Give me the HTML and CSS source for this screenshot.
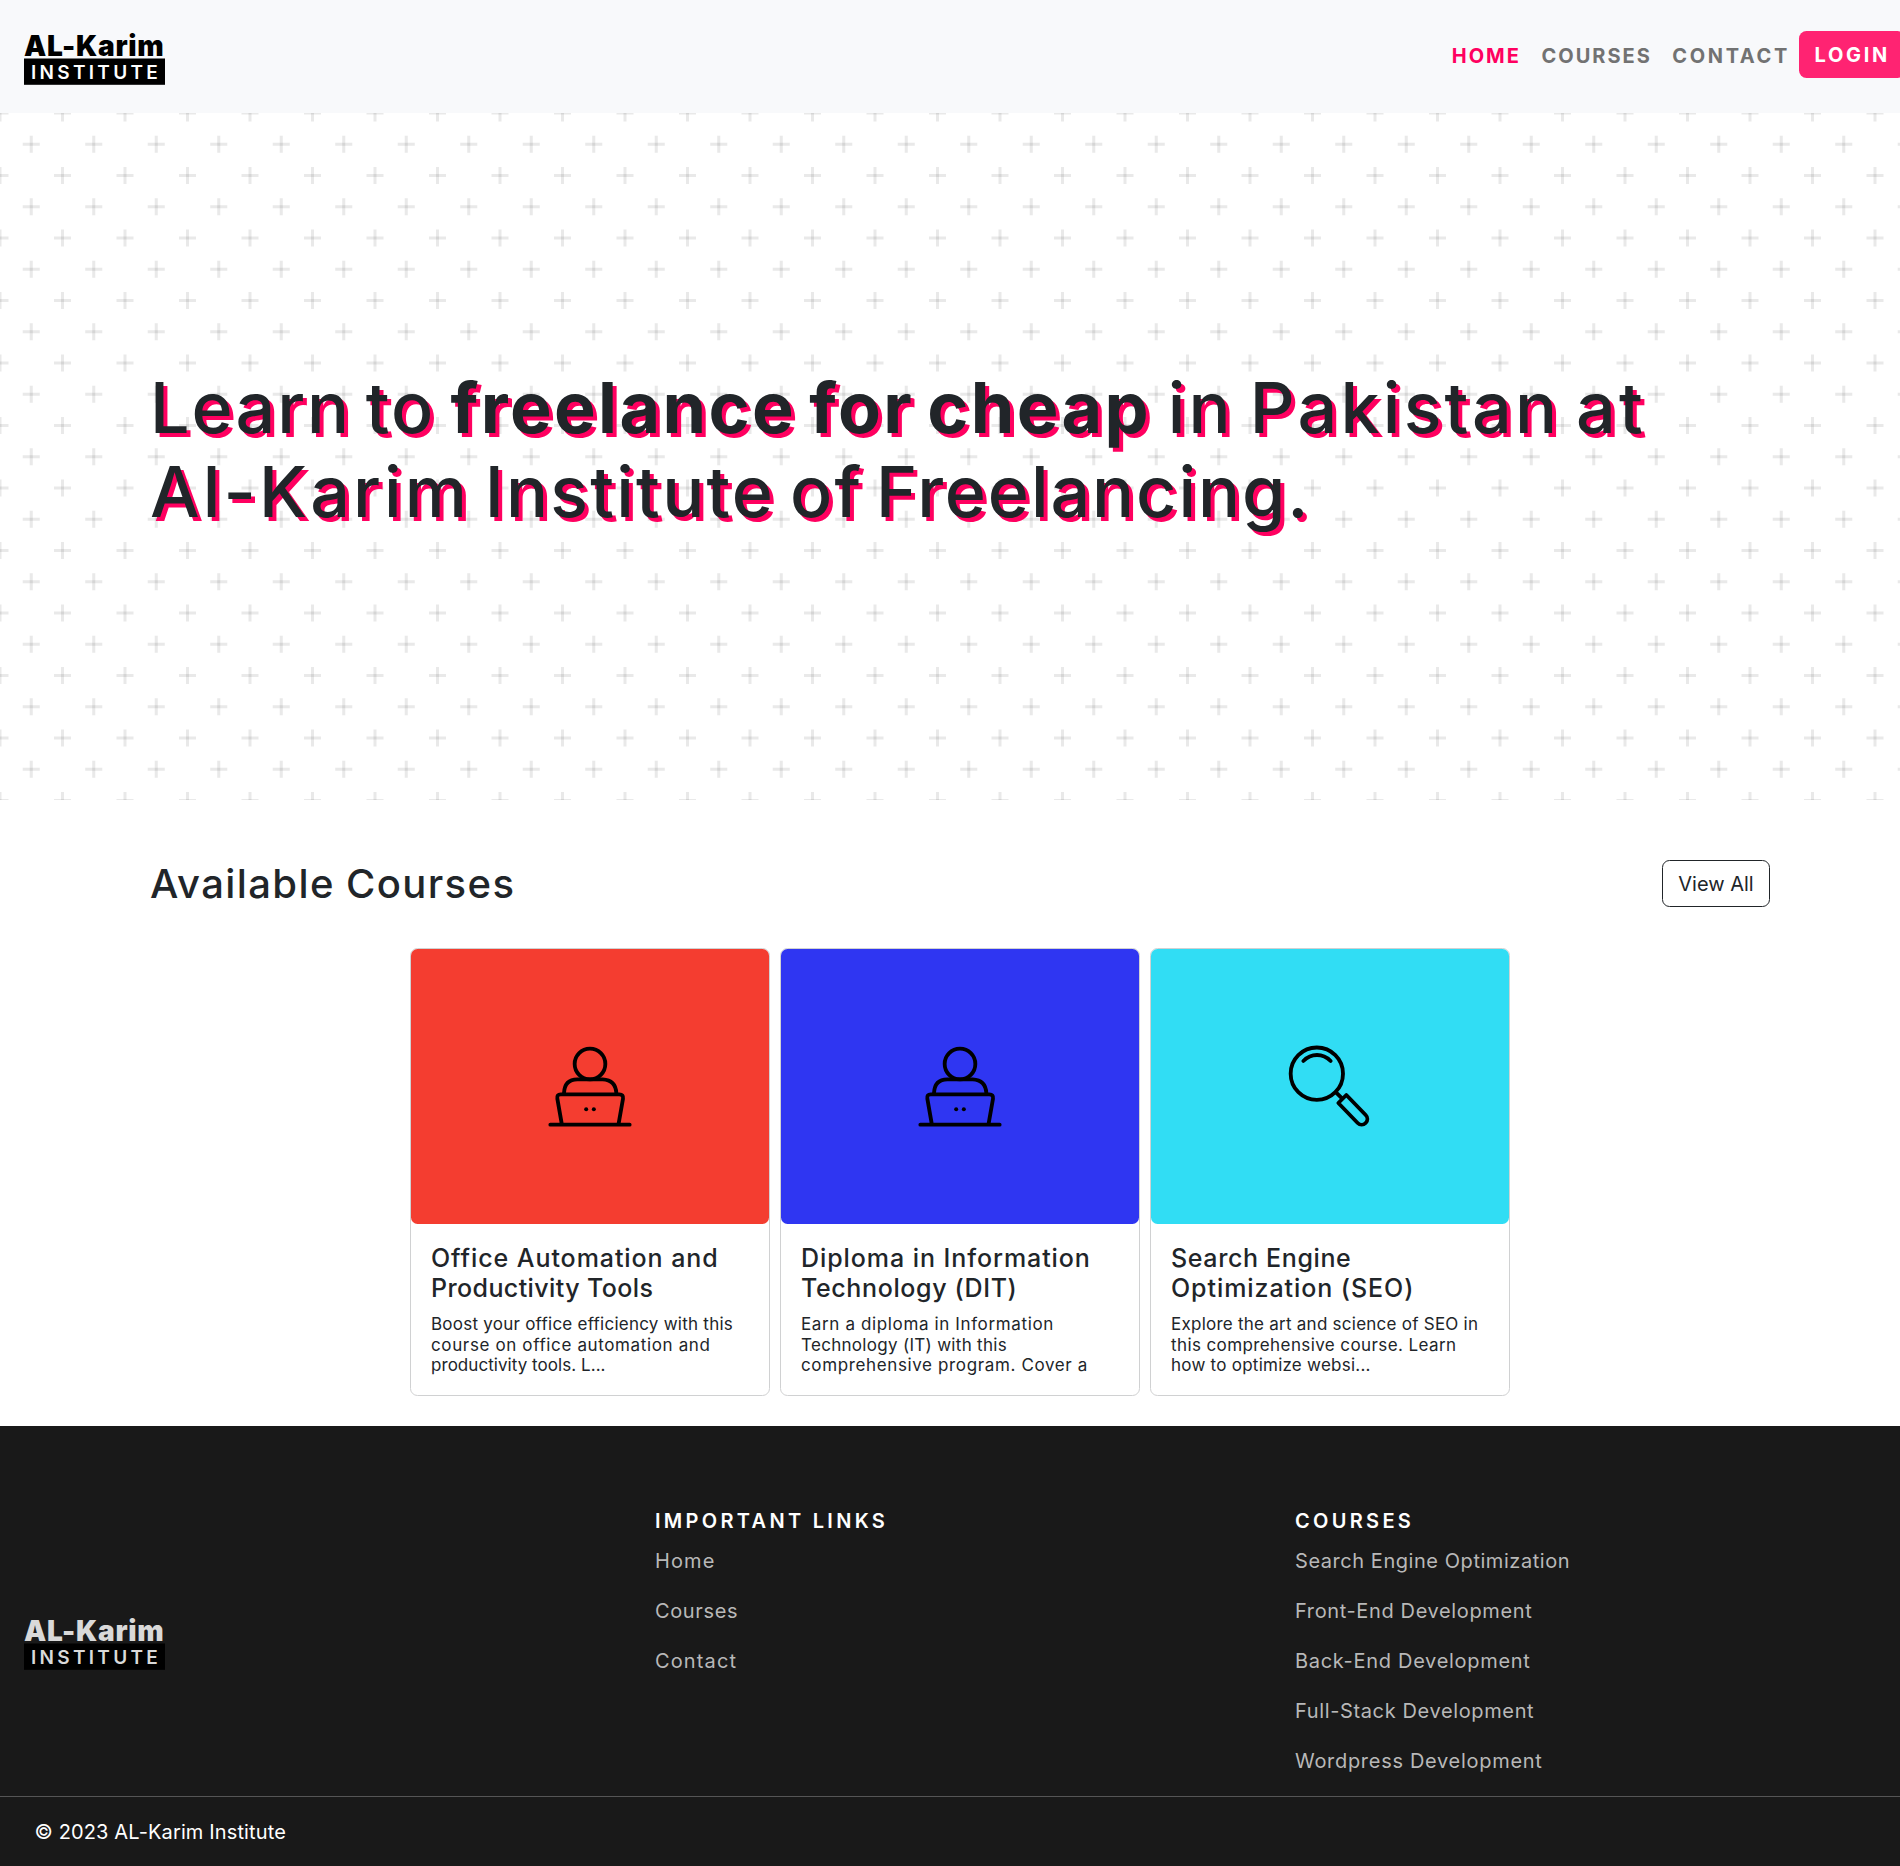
FILE: index.html
```html
<!DOCTYPE html>
<html lang="en">
<head>
<meta charset="utf-8">
<title>AL-Karim Institute</title>
<link rel="stylesheet" href="styles.css">
</head>
<body>
<header class="header">
  <a class="logo" href="#">
    <svg width="146" height="50" viewBox="0 0 146 50">
      <text class="logo-name" x="0" y="21">AL-Karim</text>
      <rect class="logo-bar" x="0" y="23.5" width="141" height="26.3"/>
      <text class="logo-sub" x="7" y="43.7">INSTITUTE</text>
    </svg>
  </a>
  <nav class="nav">
    <a class="nav-link active" href="#">HOME</a>
    <a class="nav-link" href="#">COURSES</a>
    <a class="nav-link contact" href="#">CONTACT</a>
    <a class="login" href="#">LOGIN</a>
  </nav>
</header>

<section class="hero">
  <h1 class="hero-title">
    <span class="hero-line"><span class="lead">Learn to</span> <b>freelance for cheap</b> <span class="place">in Pakistan at</span></span>
    <span class="hero-line"><span class="name">Al-Karim</span> <span class="inst">Institute of</span> <span class="free">Freelancing.</span></span>
  </h1>
</section>

<section class="courses">
  <div class="courses-head">
    <h2 class="courses-title">Available Courses</h2>
    <a class="view-all" href="#">View All</a>
  </div>
  <div class="cards">
    <article class="card">
      <div class="card-image red">
        <svg class="icon" viewBox="84 75 252 252">
          <circle cx="210" cy="132" r="46"/>
          <path d="M132 221v-2Q134 178 172 178H248Q287 180 289 219v2"/>
          <path d="M125 310L112 236Q110 223 122 223H298Q311 223 309 236L296 310M91 314H329"/>
          <circle class="dot" cx="198.500" cy="268" r="6"/><circle class="dot" cx="221.500" cy="268" r="6"/>
        </svg>
      </div>
      <div class="card-body">
        <h3 class="card-title"><span class="t9">Office Automation and</span><span class="t4">Productivity Tools</span></h3>
        <p class="card-text"><span class="t25">Boost your office efficiency with this</span><span class="t6">course on office automation and</span><span class="t05">productivity tools. L...</span></p>
      </div>
    </article>
    <article class="card">
      <div class="card-image blue">
        <svg class="icon" viewBox="84 75 252 252">
          <circle cx="210" cy="132" r="46"/>
          <path d="M132 221v-2Q134 178 172 178H248Q287 180 289 219v2"/>
          <path d="M125 310L112 236Q110 223 122 223H298Q311 223 309 236L296 310M91 314H329"/>
          <circle class="dot" cx="198.500" cy="268" r="6"/><circle class="dot" cx="221.500" cy="268" r="6"/>
        </svg>
      </div>
      <div class="card-body">
        <h3 class="card-title"><span class="t9">Diploma in Information</span><span class="t6">Technology (DIT)</span></h3>
        <p class="card-text"><span class="t6">Earn a diploma in Information</span><span class="t3">Technology (IT) with this</span><span class="t6">comprehensive program. Cover a</span></p>
      </div>
    </article>
    <article class="card">
      <div class="card-image cyan">
        <svg class="icon" viewBox="84 75 252 252">
          <circle cx="170.500" cy="161" r="78.500"/>
          <path d="M130 123Q148 105 171 105Q194 105 212 123M228 217L246 235"/>
          <path d="M235 249L259 225L317 285A16.500 16.500 0 0 1 293 309Z"/>
        </svg>
      </div>
      <div class="card-body">
        <h3 class="card-title"><span class="t6">Search Engine</span><span class="t9">Optimization (SEO)</span></h3>
        <p class="card-text"><span class="t25">Explore the art and science of SEO in</span><span class="t4">this comprehensive course. Learn</span><span class="t25">how to optimize websi...</span></p>
      </div>
    </article>
  </div>
</section>

<footer class="footer">
  <div class="footer-grid">
    <a class="footer-logo" href="#">
      <svg width="146" height="50" viewBox="0 0 146 50">
        <text class="logo-name" x="0" y="21">AL-Karim</text>
        <rect class="logo-bar" x="0" y="23.5" width="141" height="26.3"/>
        <text class="logo-sub" x="7" y="43.7">INSTITUTE</text>
      </svg>
    </a>
    <div class="footer-col">
      <h4 class="footer-title">IMPORTANT LINKS</h4>
      <a class="t11" href="#">Home</a>
      <a class="t6" href="#">Courses</a>
      <a class="t11" href="#">Contact</a>
    </div>
    <div class="footer-col">
      <h4 class="footer-title">COURSES</h4>
      <a class="t55" href="#">Search Engine Optimization</a>
      <a class="t6" href="#">Front-End Development</a>
      <a class="t7" href="#">Back-End Development</a>
      <a class="t6" href="#">Full-Stack Development</a>
      <a class="t7" href="#">Wordpress Development</a>
    </div>
  </div>
  <div class="copyright">© 2023 AL-Karim Institute</div>
</footer>
</body>
</html>
```
FILE: styles.css
```css
* { box-sizing: border-box; }
html { overflow: hidden; }
body {
  margin: 0;
  overflow-x: hidden;
  background: #fff;
  color: #212529;
  font: 400 20px/30px "Inter", "Liberation Sans", sans-serif;
}
a { color: inherit; text-decoration: none; }
h1, h2, h3, h4, p { margin: 0; }
svg { display: block; overflow: visible; }

/* Letter tracking steps */
.t05 { letter-spacing: .05px; }
.t25 { letter-spacing: .246px; }
.t3 { letter-spacing: .3px; }
.t4 { letter-spacing: .4px; }
.t55 { letter-spacing: .55px; }
.t6 { letter-spacing: .63px; }
.t7 { letter-spacing: .7px; }
.t9 { letter-spacing: .93px; }
.t11 { letter-spacing: 1.13px; }

/* Header */
.header {
  display: flex;
  align-items: center;
  justify-content: space-between;
  height: 113px;
  padding-left: 24px;
  background: #f8f9fb;
}
.logo { margin-top: 7px; }
.logo-name { font-weight: 900; font-size: 28px; letter-spacing: .7px; fill: #000; }
.logo-sub { font-weight: 600; font-size: 19px; letter-spacing: 3.3px; fill: #fff; }
.logo-bar { fill: #000; }
.nav {
  display: grid;
  grid-template-columns: 89.8px 130.8px 126.7px 106px;
  align-items: center;
  width: 448.3px;
  margin-bottom: 4px;
  font-weight: 700;
  letter-spacing: 2px;
}
.nav-link { padding-top: 2px; color: #727272; }
.nav-link.active { color: #ff0060; }
.nav-link.contact { letter-spacing: 2.63px; }
.login {
  height: 47px;
  padding: 8.5px 15.5px;
  border-radius: 7.5px;
  background: #ff2372;
  color: #fff;
  letter-spacing: 2.7px;
}

/* Hero */
.hero {
  display: flex;
  align-items: center;
  height: 687px;
  padding: 0 130px 13px 150px;
  background: #fff url("data:image/svg+xml,%3Csvg xmlns='http://www.w3.org/2000/svg' width='125' height='125'%3E%3Cdefs%3E%3Cg id='c' fill='%23000' fill-opacity='.085'%3E%3Crect x='-1.500' y='-8.500' width='3' height='17'/%3E%3Crect x='-8.500' y='-1.500' width='17' height='3'/%3E%3C/g%3E%3Cg id='r'%3E%3Cuse href='%23c'/%3E%3Cuse href='%23c' x='62.500'/%3E%3Cuse href='%23c' x='125'/%3E%3C/g%3E%3C/defs%3E%3Cuse href='%23r'/%3E%3Cuse href='%23r' x='31.250' y='31.250'/%3E%3Cuse href='%23r' y='62.500'/%3E%3Cuse href='%23r' x='31.250' y='93.750'/%3E%3Cuse href='%23r' y='125'/%3E%3C/svg%3E") 0 0 / 125px 125px;
}
.hero-title {
  font-weight: 500;
  font-size: 70px;
  line-height: 84px;
  word-spacing: -6px;
  text-shadow: 4px 4px 0 #ff0060;
  white-space: nowrap;
}
.hero-line { display: block; }
.lead { margin-right: 2.5px; letter-spacing: 2px; }
.hero-title b { margin-right: 4px; font-weight: 700; letter-spacing: 2.4px; }
.place { letter-spacing: 3.2px; }
.name { margin-right: 2px; letter-spacing: 3.1px; }
.inst { letter-spacing: 2.2px; }
.free { letter-spacing: 1.9px; }

/* Courses */
.courses { padding: 60px 130px 30px 150px; }
.courses-head {
  display: flex;
  align-items: flex-start;
  justify-content: space-between;
  height: 88px;
}
.courses-title {
  font-weight: 500;
  font-size: 40px;
  line-height: 48px;
  letter-spacing: 1.4px;
  word-spacing: -1px;
}
.view-all {
  width: 108px;
  height: 47px;
  padding: 7.5px 0;
  border: 1px solid #212529;
  border-radius: 7.5px;
  text-align: center;
}
.cards {
  display: flex;
  justify-content: center;
  gap: 10px;
}
.card {
  width: 360px;
  height: 448px;
  border: 1px solid #d0d1d2;
  border-radius: 7.5px;
}
.card-image {
  display: flex;
  align-items: center;
  justify-content: center;
  height: 275px;
  border-radius: 6.5px;
}
.red { background: #f43d30; }
.blue { background: #2f36f2; }
.cyan { background: #31ddf4; }
.icon {
  width: 84px;
  height: 84px;
  margin-top: 1px;
  fill: none;
  stroke: #000;
  stroke-width: 11.5;
  stroke-linecap: round;
  stroke-linejoin: round;
}
.dot { fill: #000; stroke: none; }
.card-body { padding: 19px 0 0 20px; white-space: nowrap; }
.card-title { font-weight: 500; font-size: 25px; line-height: 30px; }
.card-text { margin-top: 11.2px; font-size: 17px; line-height: 20.4px; }
.card-title span, .card-text span { display: block; }

/* Footer */
.footer { background: #191919; color: #fff; }
.footer-grid {
  display: grid;
  grid-template-columns: 631px 640px 1fr;
  height: 371px;
  padding: 83px 0 0 24px;
  border-bottom: 1px solid #555;
}
.footer-logo { align-self: center; margin-bottom: 15px; }
.footer-logo .logo-name, .footer-logo .logo-sub { fill: #d9d9d9; }
.footer-col { display: flex; flex-direction: column; color: #b8b8b8; }
.footer-col a { padding-bottom: 20px; }
.footer-title {
  margin-bottom: 13px;
  color: #fff;
  font-weight: 600;
  font-size: 20px;
  line-height: 24px;
  letter-spacing: 3.3px;
}
.copyright {
  height: 69px;
  padding: 20px 0 0 34.5px;
  letter-spacing: .13px;
}
```
